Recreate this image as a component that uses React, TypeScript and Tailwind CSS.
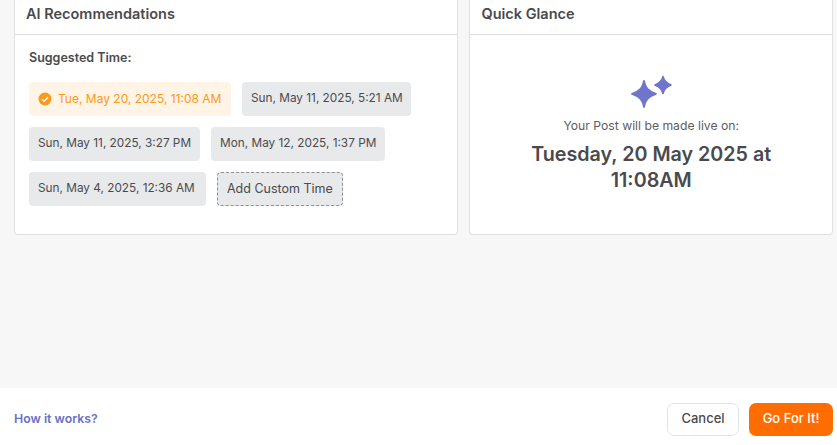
import React from 'react';

const times = [
  ['Sun, May 11, 2025, 3:27 PM', 'Mon, May 12, 2025, 1:37 PM'],
];

const Chip = ({ children }: { children: React.ReactNode }) => (
  <div className="flex h-[34px] items-center rounded-[4px] bg-[#e8e9eb] px-[9px] text-[11.8px] whitespace-nowrap text-[#4b4b4f]">
    {children}
  </div>
);

const Sparkles = () => (
  <svg width="44" height="34" viewBox="0 0 44 34" className="text-[#7075cc]" fill="currentColor">
    <path d="M15 6 C16.2 12.5 19 16 27 18.8 C19 21.6 16.2 25 15 32 C13.8 25 11 21.6 3 18.8 C11 16 13.8 12.5 15 6 Z" stroke="currentColor" strokeWidth="1.8" strokeLinejoin="round" />
    <path d="M34 1.5 C34.8 5.5 36.4 7.6 42 10 C36.4 12.4 34.8 14.5 34 18.5 C33.2 14.5 31.6 12.4 26 10 C31.6 7.6 33.2 5.5 34 1.5 Z" stroke="currentColor" strokeWidth="1.6" strokeLinejoin="round" />
  </svg>
);

export default function App() {
  return (
    <div className="flex h-[445px] w-[837px] flex-col overflow-hidden bg-[#f7f7f7] font-['Inter','Liberation_Sans',sans-serif]">
      <div className="flex flex-1 items-start gap-[11px] pl-[14px] pr-[4px]">
        {/* AI Recommendations */}
        <div className="h-[235px] w-[445px] rounded-b-[4px] border-x border-b border-[#dfe0e3] bg-white">
          <div className="flex h-[35px] items-start border-b border-[#dfe0e3] pl-[11px] pt-[5px] text-[14.5px] leading-[18px] font-semibold text-[#4a4a4e]">
            AI Recommendations
          </div>
          <div className="px-[14px] pt-[14px]">
            <div className="text-[12.5px] leading-[18px] font-semibold text-[#4a4a4e]">Suggested Time:</div>
            <div className="mt-[15px] flex flex-col gap-[11px]">
              <div className="flex gap-[11px]">
                <div className="flex h-[34px] w-[202px] items-center gap-[6px] rounded-[4px] bg-[#fff4e5] px-[9px] text-[12px] whitespace-nowrap text-[#fb9a1a]">
                  <svg width="14" height="14" viewBox="0 0 14 14">
                    <circle cx="7" cy="7" r="6.5" fill="#fb9a1a" />
                    <path d="M4 7.2 L6.2 9.2 L10 5.2" fill="none" stroke="#fff" strokeWidth="1.4" />
                  </svg>
                  Tue, May 20, 2025, 11:08 AM
                </div>
                <div className="w-[169px]">
                  <Chip>Sun, May 11, 2025, 5:21 AM</Chip>
                </div>
              </div>
              {times.map((row) => (
                <div key={row[0]} className="flex gap-[11px]">
                  {row.map((t) => (
                    <Chip key={t}>{t}</Chip>
                  ))}
                </div>
              ))}
              <div className="flex gap-[11px]">
                <div className="w-[177px]">
                  <Chip>Sun, May 4, 2025, 12:36 AM</Chip>
                </div>
                <div className="flex h-[34px] items-center rounded-[4px] border border-dashed border-[#8f8f93] bg-[#e8e9eb] px-[9px] text-[12.5px] text-[#4b4b4f]">
                  Add Custom Time
                </div>
              </div>
            </div>
          </div>
        </div>

        {/* Quick Glance */}
        <div className="h-[235px] w-[364px] rounded-b-[4px] border-x border-b border-[#dfe0e3] bg-white">
          <div className="flex h-[35px] items-start border-b border-[#dfe0e3] pl-[11px] pt-[5px] text-[14.5px] leading-[18px] font-semibold text-[#4a4a4e]">
            Quick Glance
          </div>
          <div className="flex flex-col items-center pt-[40px]">
            <Sparkles />
            <div className="mt-[9px] text-[12.2px] leading-[16px] text-[#5e5e62]">Your Post will be made live on:</div>
            <div className="mt-[7px] w-[280px] text-center text-[19.7px] leading-[26px] font-semibold text-[#4a4a4e]">
              Tuesday, 20 May 2025 at 11:08AM
            </div>
          </div>
        </div>
      </div>

      {/* Footer */}
      <div className="flex h-[57px] items-center justify-between bg-white pl-[14px] pr-[4px] pt-[5px]">
        <span className="pt-px text-[12.3px] font-semibold text-[#6b70c4]">How it works?</span>
        <div className="flex gap-[10px]">
          <button className="h-[33px] w-[72px] rounded-[7px] border border-[#e2e3e5] bg-white text-[13px] font-medium text-[#4a4a4e]">
            Cancel
          </button>
          <button className="h-[33px] w-[84px] rounded-[7px] bg-[#ff6d00] text-[13px] font-medium text-white">
            Go For It!
          </button>
        </div>
      </div>
    </div>
  );
}
